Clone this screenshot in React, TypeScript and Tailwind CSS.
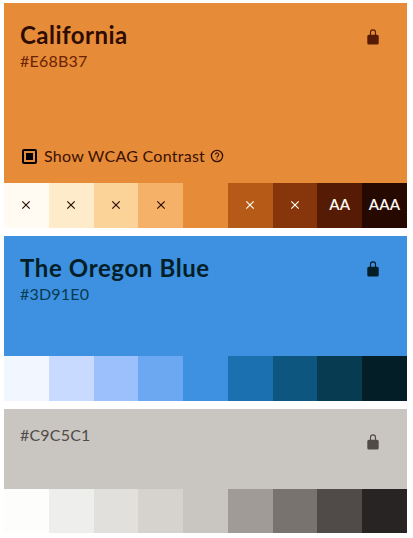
import React from "react";

type Swatch = { bg: string; label?: string; fg?: string };

function Lock({ className }: { className: string }) {
  return (
    <svg viewBox="0 0 14 16" className={`h-4 w-3.5 ${className}`} aria-label="Locked">
      <rect x="1.3" y="5.8" width="11.4" height="9.7" rx="1.6" fill="currentColor" />
      <path d="M4.5 6.5V3.4a2.5 2.5 0 0 1 5 0v3.1" fill="none" stroke="currentColor" strokeWidth="1.15" />
    </svg>
  );
}

function Cross() {
  return (
    <svg viewBox="0 0 10 10" className="h-2.5 w-2.5">
      <path d="M1.3 1.3l7.4 7.4M8.7 1.3l-7.4 7.4" stroke="currentColor" strokeWidth="1.2" />
    </svg>
  );
}

function Shades({ items, height }: { items: Swatch[]; height: string }) {
  return (
    <div className={`grid shrink-0 grid-cols-9 ${height}`}>
      {items.map((s, i) => (
        <div key={i} className={`flex items-center justify-center pb-0.5 text-[15px] font-semibold whitespace-nowrap ${s.bg} ${s.fg ?? ""}`}>
          {s.label === "x" ? <Cross /> : s.label}
        </div>
      ))}
    </div>
  );
}

const orange: Swatch[] = [
  { bg: "bg-[#fffbf3]", label: "x", fg: "text-[#2b0e02]" },
  { bg: "bg-[#feebc9]", label: "x", fg: "text-[#2b0e02]" },
  { bg: "bg-[#fbd398]", label: "x", fg: "text-[#2b0e02]" },
  { bg: "bg-[#f5b168]", label: "x", fg: "text-[#2b0e02]" },
  { bg: "bg-[#e68b37]" },
  { bg: "bg-[#b65b17]", label: "x", fg: "text-[#fffbf3]" },
  { bg: "bg-[#86360a]", label: "x", fg: "text-[#fffbf3]" },
  { bg: "bg-[#561b04]", label: "AA", fg: "text-[#fffbf3] tracking-[0.2px]" },
  { bg: "bg-[#260a01]", label: "AAA", fg: "text-[#fffbf3] tracking-[0.2px]" },
];
const blue: Swatch[] = [
  { bg: "bg-[#f2f6ff]" },
  { bg: "bg-[#c8daff]" },
  { bg: "bg-[#9bc0fb]" },
  { bg: "bg-[#6ca8f1]" },
  { bg: "bg-[#3d91e0]" },
  { bg: "bg-[#1b70b0]" },
  { bg: "bg-[#0d5680]" },
  { bg: "bg-[#073b52]" },
  { bg: "bg-[#031e27]" },
];
const gray: Swatch[] = [
  { bg: "bg-[#fdfdfc]" },
  { bg: "bg-[#eeeeec]" },
  { bg: "bg-[#e1e0dc]" },
  { bg: "bg-[#d6d3ce]" },
  { bg: "bg-[#c9c5c1]" },
  { bg: "bg-[#a09b96]" },
  { bg: "bg-[#79736f]" },
  { bg: "bg-[#504b48]" },
  { bg: "bg-[#282423]" },
];

export default function App() {
  return (
    <main className="flex h-[538px] w-[413px] flex-col gap-2 bg-white pt-[3px] pr-1.5 pl-1 font-['Lato','Noto_Sans',sans-serif]">
      <section className="flex h-[225px] flex-col bg-[#e68b37]">
        <div className="flex flex-1 flex-col justify-between pt-4 pr-[27px] pb-[17px] pl-4">
          <div className="flex items-start justify-between">
            <div>
              <h2 className="text-2xl leading-8 font-bold tracking-[0.47px] text-[#2e0c02]">California</h2>
              <p className="text-base leading-5 tracking-[0.2px] text-[#6d2204]">#E68B37</p>
            </div>
            <Lock className="mt-2.5 text-[#561b04]" />
          </div>
          <label className="flex h-5 items-center text-[#3a1002]">
            <span className="ml-0.5 flex h-[15px] w-[15px] items-center justify-center rounded-[2px] border-2 border-black">
              <span className="h-[7px] w-[7px] bg-black" />
            </span>
            <span className="ml-[7px] text-base leading-5 tracking-[0.26px] whitespace-nowrap">Show WCAG Contrast</span>
            <svg viewBox="0 0 14 14" className="ml-[5px] h-3.5 w-3.5" fill="none" stroke="currentColor">
              <circle cx="7" cy="7" r="5.6" strokeWidth="1.35" />
              <path d="M5.3 5.6a1.7 1.7 0 1 1 2.7 1.4C7.3 7.4 7 7.7 7 8.4M7 9.4v1.1" strokeWidth="1.1" />
            </svg>
          </label>
        </div>
        <Shades items={orange} height="h-[45px]" />
      </section>
      <section className="flex h-[165px] flex-col bg-[#3d91e0]">
        <div className="flex flex-1 items-start justify-between pt-4 pr-[27px] pl-4">
          <div>
            <h2 className="text-2xl leading-8 font-bold tracking-[0.62px] text-[#031e27]">The Oregon Blue</h2>
            <p className="text-base leading-5 tracking-[0.2px] text-[#073b52]">#3D91E0</p>
          </div>
          <Lock className="mt-[9px] text-[#031e27]" />
        </div>
        <Shades items={blue} height="h-[45px]" />
      </section>
      <section className="flex h-[124px] flex-col bg-[#c9c5c1]">
        <div className="flex flex-1 items-start justify-between pt-4 pr-[27px] pl-4">
          <p className="text-base leading-5 tracking-[0.2px] text-[#504b48]">#C9C5C1</p>
          <Lock className="mt-[9px] text-[#504b48]" />
        </div>
        <Shades items={gray} height="h-11" />
      </section>
    </main>
  );
}
